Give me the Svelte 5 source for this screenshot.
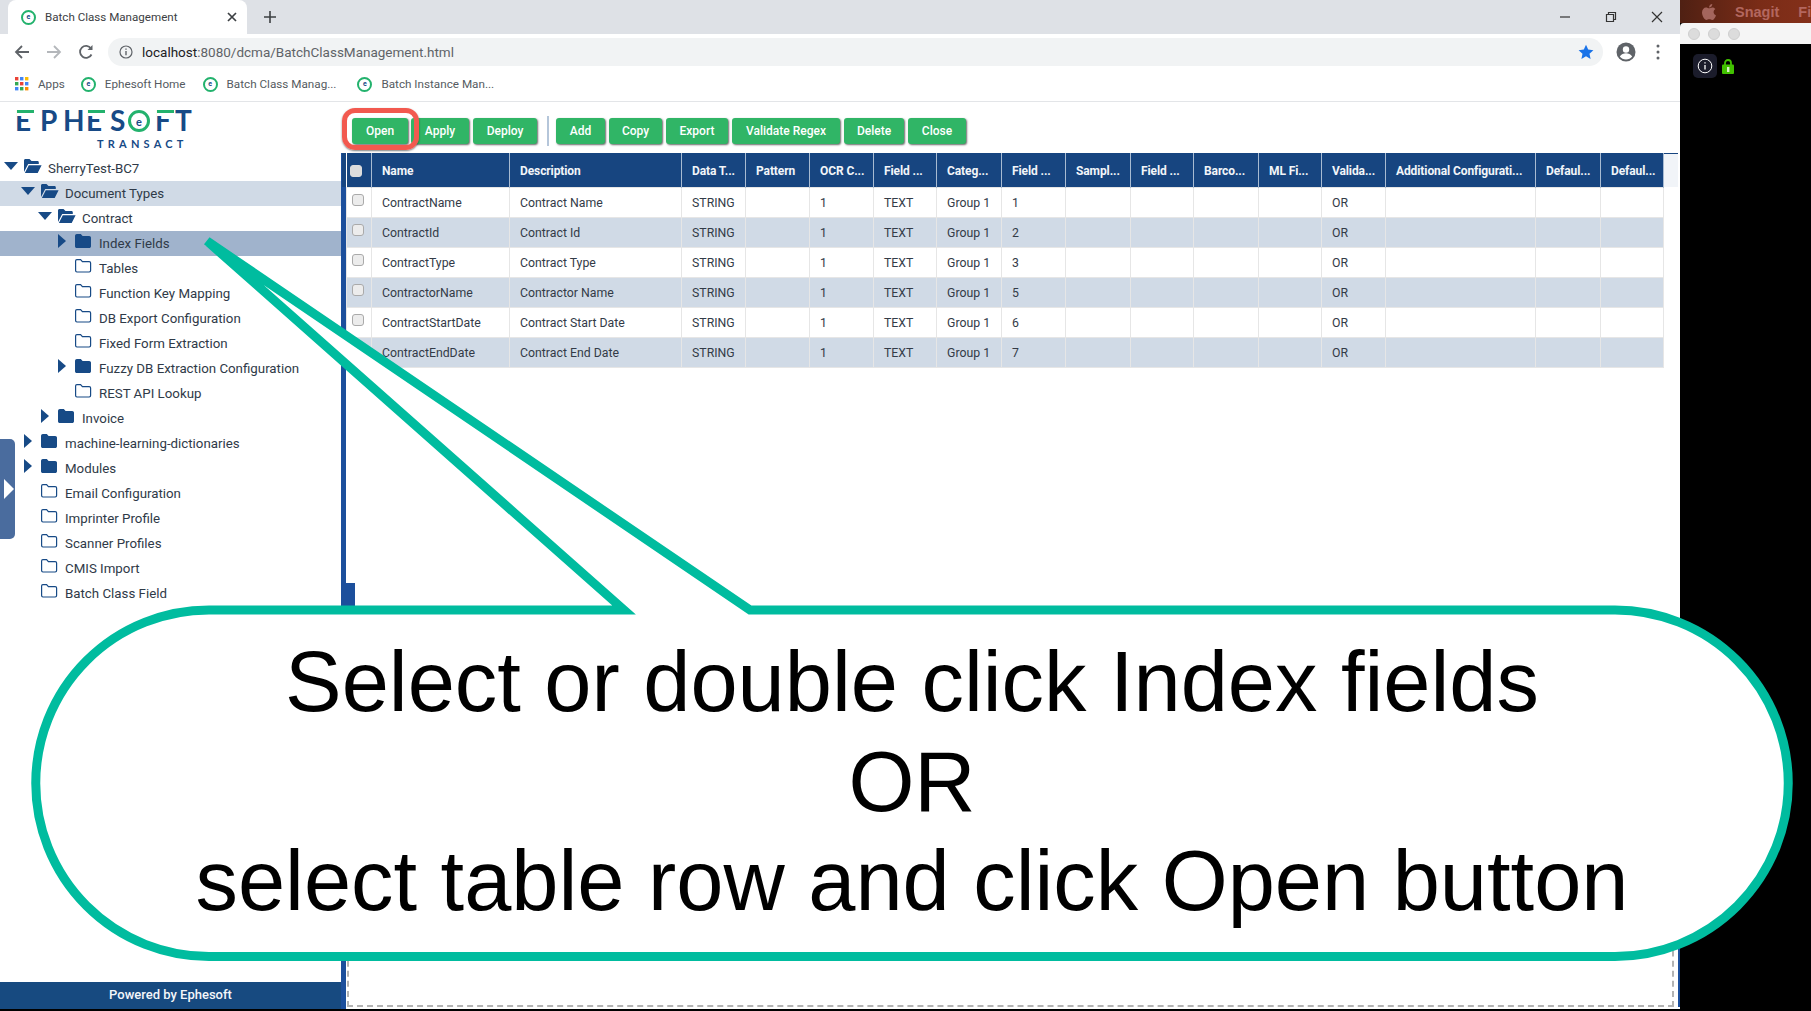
<script>
  const bookmarks = ['Ephesoft Home', 'Batch Class Manag...', 'Batch Instance Man...'];
  const tree = [
    { l: 0, t: 'SherryTest-BC7', f: 'open', a: 'down' },
    { l: 1, t: 'Document Types', f: 'open', a: 'down', c: 'soft' },
    { l: 2, t: 'Contract', f: 'open', a: 'down' },
    { l: 3, t: 'Index Fields', f: 'solid', a: 'right', c: 'sel' },
    { l: 3, t: 'Tables', f: 'line' },
    { l: 3, t: 'Function Key Mapping', f: 'line' },
    { l: 3, t: 'DB Export Configuration', f: 'line' },
    { l: 3, t: 'Fixed Form Extraction', f: 'line' },
    { l: 3, t: 'Fuzzy DB Extraction Configuration', f: 'solid', a: 'right' },
    { l: 3, t: 'REST API Lookup', f: 'line' },
    { l: 2, t: 'Invoice', f: 'solid', a: 'right' },
    { l: 1, t: 'machine-learning-dictionaries', f: 'solid', a: 'right' },
    { l: 1, t: 'Modules', f: 'solid', a: 'right' },
    { l: 1, t: 'Email Configuration', f: 'line' },
    { l: 1, t: 'Imprinter Profile', f: 'line' },
    { l: 1, t: 'Scanner Profiles', f: 'line' },
    { l: 1, t: 'CMIS Import', f: 'line' },
    { l: 1, t: 'Batch Class Field', f: 'line' }
  ];
  const btnA = ['Apply', 'Deploy'];
  const btnB = ['Add', 'Copy', 'Export', 'Validate Regex', 'Delete', 'Close'];
  const cols = [
    ['', 25], ['Name', 138], ['Description', 172], ['Data T...', 64], ['Pattern', 64], ['OCR C...', 64],
    ['Field ...', 63], ['Categ...', 65], ['Field ...', 64], ['Sampl...', 65], ['Field ...', 63], ['Barco...', 65],
    ['ML Fi...', 63], ['Valida...', 64], ['Additional Configurati...', 150], ['Defaul...', 65], ['Defaul...', 63]
  ];
  const rows = [
    ['ContractName', 'Contract Name', '1'],
    ['ContractId', 'Contract Id', '2'],
    ['ContractType', 'Contract Type', '3'],
    ['ContractorName', 'Contractor Name', '5'],
    ['ContractStartDate', 'Contract Start Date', '6'],
    ['ContractEndDate', 'Contract End Date', '7']
  ];
</script>

{#snippet fav()}
  <span class="fav">e</span>
{/snippet}

{#snippet folder(kind)}
  <svg class="folder" viewBox="0 0 19 16" width="19" height="16" aria-hidden="true">
    {#if kind === 'open'}
      <path d="M1 14V2.5C1 1.7 1.6 1 2.5 1h4l2 2h6c.8 0 1.3.6 1.3 1.3V6H5.2L1 14zM5.8 7.2H18.6L14.7 15H1.9z" fill="#174a86"/>
    {:else if kind === 'solid'}
      <path d="M1 3c0-1.1.8-2 1.8-2h4l1.8 2h6.6c1 0 1.8.8 1.8 1.8v8.4c0 1-.8 1.8-1.8 1.8H2.8C1.8 15 1 14.2 1 13.200z" fill="#174a86"/>
    {:else}
      <path d="M1.600 3c0-.8.6-1.400 1.300-1.400h3.700l1.800 2h6.800c.8 0 1.400.6 1.400 1.300v7.700c0 .8-.6 1.400-1.400 1.400H2.900c-.7 0-1.300-.6-1.300-1.400z" fill="none" stroke="#174a86" stroke-width="1.200"/>
    {/if}
  </svg>
{/snippet}

<div class="screen">
  <div class="chrome">
    <header class="tabstrip">
      <div class="tab">
        {@render fav()}
        <span class="tabtitle">Batch Class Management</span>
        <svg class="tabx" viewBox="0 0 10 10" width="10" height="10"><path d="M1 1l8 8M9 1l-8 8" stroke="#3c4043" stroke-width="1.700"/></svg>
      </div>
      <svg class="plus" viewBox="0 0 12 12" width="12" height="12"><path d="M6 0v12M0 6h12" stroke="#3c4043" stroke-width="1.600"/></svg>
      <div class="winctl">
        <svg viewBox="0 0 12 12" width="12" height="12"><path d="M1 6h10" stroke="#333" stroke-width="1.200"/></svg>
        <svg viewBox="0 0 12 12" width="12" height="12"><path d="M1.500 3.500h7v7h-7zM3.500 3.500v-2h7v7h-2" fill="none" stroke="#333" stroke-width="1.200"/></svg>
        <svg viewBox="0 0 12 12" width="12" height="12"><path d="M1 1l10 10M11 1L1 11" stroke="#333" stroke-width="1.200"/></svg>
      </div>
    </header>

    <div class="navbar">
      <svg class="nav n1" viewBox="0 0 16 16" width="16" height="16"><path d="M15 8H2M8 2L2 8l6 6" fill="none" stroke="#5f6368" stroke-width="1.800"/></svg>
      <svg class="nav n2" viewBox="0 0 16 16" width="16" height="16"><path d="M1 8h13M8 2l6 6-6 6" fill="none" stroke="#b4b7bb" stroke-width="1.800"/></svg>
      <svg class="nav n3" viewBox="0 0 16 16" width="16" height="16"><path d="M13.500 10.500A6 6 0 1 1 13 4.500" fill="none" stroke="#5f6368" stroke-width="1.800"/><path d="M14.500 1v5h-5z" fill="#5f6368"/></svg>
      <div class="omni">
        <svg viewBox="0 0 14 14" width="14" height="14"><circle cx="7" cy="7" r="6" fill="none" stroke="#5f6368" stroke-width="1.200"/><path d="M7 6v4.300M7 3.500v1.300" stroke="#5f6368" stroke-width="1.400"/></svg>
        <span class="url"><b>localhost</b>:8080/dcma/BatchClassManagement.html</span>
        <svg class="star" viewBox="0 0 16 16" width="16" height="16"><path d="M8 .8l2.200 4.800 5.200.6-3.900 3.500 1.100 5.200L8 12.300l-4.600 2.600 1.100-5.200L.6 6.200l5.200-.6z" fill="#1a73e8"/></svg>
      </div>
      <svg class="profile" viewBox="0 0 20 20" width="20" height="20"><circle cx="10" cy="10" r="9.500" fill="#5f6368"/><circle cx="10" cy="7.500" r="3.200" fill="#fff"/><path d="M3.800 14.500c1.500-2.500 3.800-3.300 6.200-3.300s4.700.8 6.200 3.300c-1.500 1.900-3.700 3-6.200 3s-4.700-1.100-6.200-3z" fill="#fff"/></svg>
      <svg class="dots" viewBox="0 0 4 16" width="4" height="16"><circle cx="2" cy="2" r="1.500" fill="#5f6368"/><circle cx="2" cy="8" r="1.500" fill="#5f6368"/><circle cx="2" cy="14" r="1.500" fill="#5f6368"/></svg>
    </div>

    <nav class="bookmarks">
      <svg class="apps" viewBox="0 0 14 14" width="14" height="14">
        {#each [0, 5, 10] as y, j}
          {#each [0, 5, 10] as x, i}
            <rect x={x} y={y} width="3.400" height="3.400" fill={['#ea4335', '#4285f4', '#fbbc05', '#34a853', '#ea4335', '#4285f4', '#4285f4', '#34a853', '#fb8c00'][j * 3 + i]}/>
          {/each}
        {/each}
      </svg>
      <span class="bm first">Apps</span>
      {#each bookmarks as b}
        <span class="bmitem">{@render fav()}<span class="bm">{b}</span></span>
      {/each}
    </nav>

    <div class="main">
      <aside class="sidebar">
        <div class="logo">
          <div class="wordmark">
            <span class="let w25 bar">E</span><span class="let w23">P</span><span class="let w23">H</span><span class="let w24 bar">E</span><span class="let w16">S</span><span class="ocell"><span class="logo-o">e</span></span><span class="let w20 bar">F</span><span class="let w13">T</span>
          </div>
          <div class="transact">TRANSACT</div>
        </div>
        <div class="tree">
          {#each tree as n}
            <div class="node {n.c ?? ''}" style:padding-left="{n.l * 17}px">
              <span class="arrow">
                {#if n.a === 'down'}
                  <svg viewBox="0 0 14 8" width="14" height="8"><path d="M0 0h14L7 8z" fill="#174a86"/></svg>
                {:else if n.a === 'right'}
                  <svg viewBox="0 0 8 14" width="8" height="14"><path d="M0 0l8 7-8 7z" fill="#174a86"/></svg>
                {/if}
              </span>
              {@render folder(n.f)}
              <span class="label">{n.t}</span>
            </div>
          {/each}
        </div>
        <footer class="powered">Powered by Ephesoft</footer>
        <div class="handle"><svg viewBox="0 0 10 20" width="10" height="20"><path d="M0 0l10 10L0 20z" fill="#fff"/></svg></div>
      </aside>

      <section class="pane">
        <div class="actions">
          <button class="btn open">Open</button>
          {#each btnA as b}<button class="btn">{b}</button>{/each}
          <span class="sep"></span>
          {#each btnB as b}<button class="btn">{b}</button>{/each}
          <span class="redmark"></span>
        </div>
        <div class="body">
          <span class="grip"></span>
          <div class="content">
            <div class="tablewrap">
              <table>
                <colgroup>
                  {#each cols as c}<col style:width="{c[1]}px" />{/each}
                </colgroup>
                <thead>
                  <tr>
                    <th><span class="cb head"></span></th>
                    {#each cols.slice(1) as c}<th>{c[0]}</th>{/each}
                  </tr>
                </thead>
                <tbody>
                  {#each rows as r}
                    <tr>
                      <td><span class="cb"></span></td>
                      <td>{r[0]}</td>
                      <td>{r[1]}</td>
                      <td>STRING</td>
                      <td></td>
                      <td>1</td>
                      <td>TEXT</td>
                      <td>Group 1</td>
                      <td>{r[2]}</td>
                      <td></td><td></td><td></td><td></td>
                      <td>OR</td>
                      <td></td><td></td><td></td>
                    </tr>
                  {/each}
                </tbody>
              </table>
              <div class="headtail"></div>
            </div>
            <div class="dropzone"></div>
          </div>
        </div>
      </section>
    </div>
  </div>

  <div class="mac">
    <div class="menubar">
      <svg class="apple" viewBox="0 0 14 16" width="14" height="16"><path d="M10.300 0c.1 1.900-1.500 3.500-3.200 3.400C6.900 1.700 8.600.1 10.300 0zM7.100 4.300c.8 0 1.800-.9 3.300-.9 1.100 0 2.300.6 3 1.600-2.700 1.600-2.200 5.300.6 6.400-.7 1.800-2.200 4.600-3.900 4.600-1 0-1.500-.7-2.800-.7s-1.900.7-2.800.7C2.500 16 0 11.900 0 8.500c0-3 2-5 4-5 1.300 0 2.300.8 3.100.8z" fill="#a4655c"/></svg>
      <span class="snagit">Snagit</span>
      <span class="snagit fi">Fil</span>
    </div>
    <div class="macwin">
      <span class="light"></span><span class="light"></span><span class="light"></span>
    </div>
    <div class="macbody">
      <span class="infobox"><svg viewBox="0 0 16 16" width="16" height="16"><circle cx="8" cy="8" r="6.800" fill="none" stroke="#fff" stroke-width="1"/><path d="M8 7v4.500M8 4.200v1.400" stroke="#fff" stroke-width="1.300"/></svg></span>
      <svg class="lock" viewBox="0 0 12 15" width="12" height="15"><path d="M3 6V4a3 3 0 0 1 6 0v2" fill="none" stroke="#41c100" stroke-width="1.800"/><rect y="5.500" width="12" height="9.500" rx="1" fill="#41c100"/><rect x="5" y="8" width="2.400" height="5" fill="#d8f0c8"/></svg>
    </div>
  </div>

  <svg class="callout-shape" viewBox="0 0 1811 1011" width="1811" height="1011" aria-hidden="true">
    <path d="M207 241L750 610H1615A173 173 0 0 1 1615 956.500H209A173 173 0 0 1 209 610H624Z" fill="#fff" stroke="#00bc9f" stroke-width="9"/>
  </svg>
  <div class="callout-text">
    <div>Select or double click Index fields</div>
    <div>OR</div>
    <div>select table row and click Open button</div>
  </div>
</div>

<style>
  :global(body) { margin: 0; background: #000; }
  .screen { position: relative; display: flex; width: 1811px; height: 1011px; overflow: hidden; background: #000; font-family: Roboto, "Liberation Sans", sans-serif; }
  .chrome { display: flex; flex-direction: column; width: 1680px; height: 1009px; background: #fff; }

  .tabstrip { position: relative; display: flex; align-items: center; height: 34px; background: #dee1e6; flex: none; }
  .tab { display: flex; align-items: center; align-self: stretch; width: 239px; margin-left: 8px; background: #fff; border-radius: 8px 8px 0 0; padding-left: 13px; box-sizing: border-box; }
  .tabtitle { margin-left: 9px; font-size: 11.600px; color: #3c4043; white-space: nowrap; }
  .tabx { margin-left: auto; margin-right: 10px; }
  .plus { margin-left: 17px; }
  .winctl { display: flex; gap: 34px; margin-left: auto; margin-right: 17px; }
  .fav { display: inline-flex; align-items: center; justify-content: center; box-sizing: border-box; width: 15px; height: 15px; border: 2.500px solid #23b26d; border-radius: 50%; font-size: 7px; font-weight: 700; color: #174a86; line-height: 1; flex: none; }

  .navbar { display: flex; align-items: center; height: 35px; flex: none; background: #fff; }
  .nav { flex: none; }
  .n1 { margin-left: 14px; }
  .n2 { margin-left: 16px; }
  .n3 { margin-left: 16px; }
  .omni { display: flex; align-items: center; width: 1495px; height: 28px; margin-left: 14px; border-radius: 14px; background: #f1f3f4; padding: 0 9px 0 11px; box-sizing: border-box; }
  .url { margin-left: 9px; font-size: 13.500px; color: #5f6368; white-space: nowrap; }
  .url b { font-weight: 400; color: #202124; }
  .star { margin-left: auto; }
  .profile { margin-left: 13px; flex: none; }
  .dots { margin-left: 20px; flex: none; }

  .bookmarks { display: flex; align-items: center; height: 33px; flex: none; border-bottom: 1px solid #e3e5e8; box-sizing: border-box; padding: 0 0 2px 15px; background: #fff; }
  .bm { font-size: 11.700px; color: #555b61; white-space: nowrap; }
  .bm.first { margin-left: 9px; }
  .bmitem { display: flex; align-items: center; gap: 9px; margin-left: 16px; }
  .bmitem + .bmitem { margin-left: 17px; }
  .bmitem:last-child { margin-left: 21px; }

  .main { display: flex; flex: 1; min-height: 0; }
  .sidebar { position: relative; display: flex; flex-direction: column; width: 341px; flex: none; background: #fff; }
  .logo { height: 54px; flex: none; padding: 8px 0 0 15px; box-sizing: border-box; position: relative; }
  .wordmark { display: flex; height: 20px; }
  .let { position: relative; font-family: Lato, sans-serif; font-size: 28px; font-weight: 700; line-height: 20px; color: #174a86; flex: none; overflow: visible; }
  .w25 { width: 25px; }
  .w24 { width: 24px; }
  .w23 { width: 23px; }
  .w20 { width: 20px; }
  .w16 { width: 16px; }
  .w13 { width: 13px; }
  .let.bar::before { content: ""; position: absolute; left: 2px; width: 17px; top: 0; height: 3px; background: #23b26d; border-bottom: 3px solid #fff; }
  .ocell { width: 29px; flex: none; padding-left: 2px; box-sizing: border-box; }
  .logo-o { display: flex; align-items: center; justify-content: center; box-sizing: border-box; width: 22px; height: 22px; border: 3px solid #23b26d; border-radius: 50%; font-family: Lato, sans-serif; font-size: 11px; font-weight: 700; color: #174a86; line-height: 1; }
  .transact { position: absolute; left: 97px; top: 37px; font-family: Lato, sans-serif; font-size: 11px; font-weight: 700; letter-spacing: 4.200px; color: #174a86; line-height: 9px; white-space: nowrap; }
  .tree { flex: 1; min-height: 0; color: #2f3a48; }
  .node { display: flex; align-items: center; height: 25px; font-size: 13.300px; white-space: nowrap; }
  .node.soft { background: #d0dae6; }
  .node.sel { background: #a0b3cc; }
  .arrow { display: flex; align-items: center; justify-content: center; width: 21px; height: 20px; flex: none; transform: translateY(-3px); }
  .folder { margin-left: 2px; flex: none; transform: translateY(-3px); }
  .label { margin-left: 6px; }
  .powered { height: 27px; flex: none; background: #174a80; color: #f3f6fa; font-size: 13px; font-weight: 500; display: flex; align-items: center; justify-content: center; padding-bottom: 2px; box-sizing: border-box; }
  .handle { position: absolute; left: 0; top: 337px; width: 15px; height: 100px; background: #4a6c9e; border-radius: 0 5px 5px 0; display: flex; align-items: center; padding-left: 4px; box-sizing: border-box; }

  .pane { display: flex; flex-direction: column; flex: 1; min-width: 0; }
  .actions { position: relative; display: flex; align-items: flex-start; height: 51px; flex: none; padding: 16px 0 0 11px; box-sizing: border-box; background: #fff; gap: 4px; }
  .btn { height: 26px; border: 0; border-radius: 3px; background: #30b566; color: #fff; font-family: Roboto, sans-serif; font-size: 12px; font-weight: 500; padding: 0; box-shadow: 1px 1px 2px rgba(0, 0, 0, .6); }
  .btn:nth-of-type(1) { width: 56px; margin-right: -1px; }
  .btn:nth-of-type(2) { width: 58px; }
  .btn:nth-of-type(3) { width: 64px; }
  .btn:nth-of-type(4) { width: 49px; }
  .btn:nth-of-type(5) { width: 53px; }
  .btn:nth-of-type(6) { width: 62px; }
  .btn:nth-of-type(7) { width: 108px; }
  .btn:nth-of-type(8) { width: 60px; }
  .btn:nth-of-type(9) { width: 58px; }
  .sep { width: 2px; height: 30px; margin: -2px 3px 0 6px; background: #b5c6da; }
  .redmark { position: absolute; left: 1px; top: 6px; width: 77px; height: 42px; box-sizing: border-box; border: 5px solid #f2594f; border-radius: 13px; box-shadow: 0 1px 2px rgba(0, 0, 0, .5); }

  .body { position: relative; display: flex; flex: 1; min-height: 0; }
  .grip { position: relative; width: 5px; flex: none; background: #1c4f9c; }
  .grip::before { content: ""; position: absolute; left: 1px; right: 0; top: 0; height: 34px; background: #174580; }
  .grip::after { content: ""; position: absolute; left: 0; top: 430px; width: 14px; height: 23px; background: #1c4f9c; }
  .content { display: flex; flex-direction: column; flex: 1; min-width: 0; }
  .tablewrap { display: flex; flex: none; align-items: flex-start; }
  table { width: 1317px; table-layout: fixed; border-collapse: collapse; font-size: 12.300px; color: #333b47; }
  th { height: 34px; padding: 2px 0 0 10px; background: #174580; color: #f2f5f9; font-weight: 700; font-size: 12px; letter-spacing: -.1px; text-align: left; white-space: nowrap; overflow: hidden; border: 0; border-right: 1px solid #a8bbd2; box-sizing: border-box; }
  td { height: 30px; padding: 2px 0 0 10px; border: 1px solid #e6e6e6; white-space: nowrap; overflow: hidden; box-sizing: border-box; }
  tbody tr:nth-child(even) td { background: #d0dae6; }
  th:first-child { padding: 0 0 0 3px; text-align: left; }
  td:first-child { padding: 0 0 0 5px; text-align: left; }
  .cb { display: inline-block; width: 12px; height: 12px; border: 1px solid #aaa; border-radius: 3px; background: #ececec; vertical-align: 2px; box-sizing: border-box; }
  .cb.head { background: #dcdcdc; border-color: #ddd; vertical-align: middle; }
  .headtail { width: 14px; height: 34px; background: #f1f4f8; border-top: 1px solid #174580; box-sizing: border-box; }
  .dropzone { flex: 1; margin: 300px 0 2px 1px; box-sizing: border-box; border: 2px dashed #b4b4b4; border-top: 0; box-shadow: 4px 0 0 #fff, 6px 0 0 #1c4f9c; width: 1327px; }

  .mac { display: flex; flex-direction: column; width: 131px; flex: none; background: #000; }
  .menubar { display: flex; align-items: center; height: 23px; padding-left: 22px; box-sizing: border-box; background: linear-gradient(90deg, #4f2013, #7a2c17 60%, #84301a); overflow: hidden; white-space: nowrap; }
  .apple { flex: none; }
  .snagit { flex: none; margin-left: 19px; font-family: "Liberation Sans", sans-serif; font-size: 14.500px; font-weight: 700; color: #b3675f; }
  .snagit.fi { margin-left: 19px; }
  .macwin { display: flex; align-items: center; gap: 8px; height: 21px; padding-left: 8px; background: #f5f5f5; border-radius: 4px 0 0 0; box-sizing: border-box; }
  .light { width: 12px; height: 12px; border-radius: 50%; background: #dcdcdc; border: 1px solid #cfcfcf; box-sizing: border-box; }
  .macbody { display: flex; align-items: flex-start; padding: 10px 0 0 13px; }
  .infobox { display: flex; align-items: center; justify-content: center; width: 24px; height: 24px; border-radius: 5px; background: #1b1c2b; }
  .lock { margin: 5px 0 0 5px; }

  .callout-shape { position: absolute; left: 0; top: 0; pointer-events: none; }
  .callout-text { position: absolute; left: 36px; top: 632px; width: 1752px; text-align: center; font-family: "Liberation Sans", Arial, sans-serif; font-size: 84.800px; line-height: 99.500px; color: #000; white-space: nowrap; }
</style>
